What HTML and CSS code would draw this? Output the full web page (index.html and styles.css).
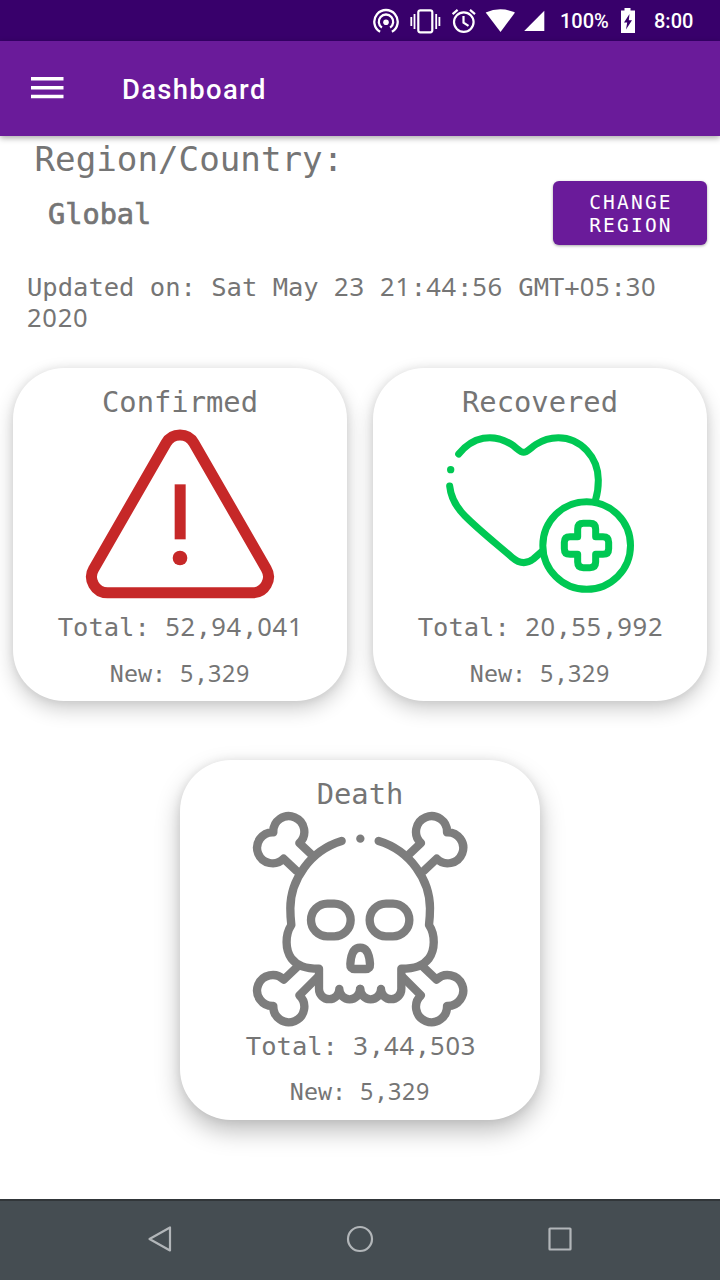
FILE: index.html
```html
<!DOCTYPE html>
<html lang="en">
<head>
<meta charset="utf-8">
<title>Dashboard</title>
<link rel="stylesheet" href="styles.css">
</head>
<body>
<div class="status">
  <svg class="status-icons" width="174" height="28" viewBox="0 0 174 28" fill="none" stroke="#fff">
    <g stroke-width="2.3">
      <path d="M7.1 24.8A11.7 11.7 0 1 1 18.9 24.8"/>
      <path d="M8.9 20.6A7.2 7.2 0 1 1 17.1 20.6"/>
      <circle cx="13" cy="15.2" r="2.8" fill="#fff" stroke="none"/>
    </g>
    <g stroke-width="2.2">
      <rect x="45.3" y="3.3" width="14" height="22" rx="2"/>
      <path d="M41.5 7v15M38.3 10v9M63.2 7v15M66.4 10v9" stroke-width="1.8"/>
    </g>
    <g stroke-width="2.2">
      <circle cx="90.8" cy="15.1" r="9.8"/>
      <path d="M90.5 9v6.700l5 3.200M79.600 7.100l5-4.200M102 7.100l-5-4.200"/>
    </g>
    <path d="M112.700 5.600Q127.300-1.200 142 5.600L127.500 25z" fill="#fff" stroke="none"/>
    <path d="M171.300 3.800V24H151.200z" fill="#fff" stroke="none"/>
  </svg>
  <span class="battery">100%</span>
  <svg class="battery-icon" width="16" height="26" viewBox="0 0 16 26">
    <path d="M4.5 0h6v2.6H15V25H1V2.6h3.5z" fill="#fff"/>
    <path d="M9.500 6L4 14.400h3.200L6 21.500 12 12.300H8.800z" fill="#38006b"/>
  </svg>
  <span class="clock">8:00</span>
</div>
<header class="appbar">
  <svg class="menu" width="33" height="22" viewBox="0 0 33 22" fill="#fff"><path d="M0 0h32.5v3.500H0zM0 8.900h32.500v3.500H0zM0 17.700h32.500v3.500H0z"/></svg>
  <h1 class="title">Dashboard</h1>
</header>
<main class="content">
  <section class="region">
    <div>
      <div class="region-label">Region/Country:</div>
      <div class="region-name">Global</div>
    </div>
    <button class="change">CHANGE<br>REGION</button>
  </section>
  <p class="updated">Updated on: Sat May <span class="num">23</span> <span class="num">21</span>:<span class="num">44</span>:<span class="num">56</span> GMT+<span class="num">05</span>:<span class="num">30</span><br><span class="num">2020</span></p>
  <section class="row">
    <article class="card">
      <h2 class="name">Confirmed</h2>
      <svg class="icon" width="220" height="190" viewBox="0 0 660 570" fill="none" stroke="#c62828" stroke-width="33">
        <path d="M71.4 446L288.4 69A48 48 0 0 1 371.6 69L588.6 446A48 48 0 0 1 547 518.5H113A48 48 0 0 1 71.4 446z"/>
        <path d="M330.500 193v165"/>
        <circle cx="330" cy="414" r="22" fill="#c62828" stroke="none"/>
      </svg>
      <p class="total">Total: <span class="num">52</span>,<span class="num">94</span>,<span class="num">041</span></p>
      <p class="new">New: <span class="num">5</span>,<span class="num">329</span></p>
    </article>
    <article class="card">
      <h2 class="name">Recovered</h2>
      <svg class="icon" width="220" height="190" viewBox="0 0 660 570" fill="none" stroke="#00c853" stroke-width="21" stroke-linecap="round" stroke-linejoin="round">
        <path d="M86 102C128 50 188 38 244 73C258 82 271 97 281 97S304 82 318 73C341 58 362 53 385 53C452 53 505 112 505 180C505 203 502 222 497 238"/>
        <path d="M59 198C63 235 82 265 105 288C150 333 200 372 246 412C268 431 289 433 310 417L334 396"/>
        <circle cx="62" cy="149" r="11" fill="#00c853" stroke="none"/>
        <circle cx="470" cy="376.500" r="131.500"/>
        <path d="M460 310H480Q497 310 497 327V350H519Q536 350 536 367V386Q536 403 519 403H497V426Q497 443 480 443H460Q443 443 443 426V403H420Q403 403 403 386V367Q403 350 420 350H443V327Q443 310 460 310z"/>
      </svg>
      <p class="total">Total: <span class="num">20</span>,<span class="num">55</span>,<span class="num">992</span></p>
      <p class="new">New: <span class="num">5</span>,<span class="num">329</span></p>
    </article>
  </section>
  <article class="card card-death">
    <h2 class="name">Death</h2>
    <svg class="icon-death" width="216" height="216" viewBox="36 123 648 648" fill="none" stroke="#7d7d7d" stroke-width="25" stroke-linecap="round" stroke-linejoin="round">
      <g id="left-half">
        <path d="M212 251L178 219A46.500 46.500 0 1 0 100 187A46.500 46.500 0 1 0 131 266L170 303"/>
        <path d="M232 622L178 676A46.500 46.500 0 1 1 100 708A46.500 46.500 0 1 1 131 629L172 590"/>
        <path d="M305 213C210 242 151 330 151 415Q151 440 154 465C134 495 136 540 154 565C172 588 196 596 237 596V657A30.500 30.500 0 0 0 298 657A31 31 0 0 0 360 657"/>
        <rect x="213" y="401" width="119" height="98" rx="49"/>
      </g>
      <use href="#left-half" transform="translate(721) scale(-1 1)"/>
      <path d="M344 597H377Q391 597 390 582C388 553 382 533 360.500 533C339 533 333 553 331 582Q330 597 344 597z"/>
      <circle cx="361" cy="206" r="12.500" fill="#7d7d7d" stroke="none"/>
    </svg>
    <p class="total">Total: <span class="num">3</span>,<span class="num">44</span>,<span class="num">503</span></p>
    <p class="new">New: <span class="num">5</span>,<span class="num">329</span></p>
  </article>
</main>
<nav class="navbar">
  <svg width="28" height="28" viewBox="0 0 28 28"><path d="M24 2.500V25.500L3.500 14z"/></svg>
  <svg width="28" height="28" viewBox="0 0 28 28"><circle cx="14" cy="14" r="12"/></svg>
  <svg width="28" height="28" viewBox="0 0 28 28"><rect x="3.500" y="3.500" width="21" height="21" rx=".5"/></svg>
</nav>
</body>
</html>
```
FILE: styles.css
```css
* { box-sizing: border-box; }
body {
  margin: 0;
  width: 720px;
  height: 1280px;
  display: flex;
  flex-direction: column;
  overflow: hidden;
  background: #fff;
  color: #757575;
  font-family: "Droid Sans Mono", "DejaVu Sans Mono", monospace;
}
h1, h2, p { margin: 0; font-weight: 400; }
svg { display: block; flex: none; }

.status {
  height: 41px;
  padding-left: 373px;
  display: flex;
  align-items: center;
  background: #38006b;
  color: #fff;
  font: 500 20px/41px Roboto, sans-serif;
}
.battery { width: 48px; margin-left: 13px; padding-top: 2px; }
.battery-icon { margin-left: 12px; }
.clock { margin-left: 18px; padding-top: 2px; }

.appbar {
  height: 95px;
  padding-left: 31px;
  display: flex;
  align-items: center;
  gap: 58px;
  background: #6a1b9a;
  box-shadow: 0 2px 6px rgba(0, 0, 0, .35);
  color: #fff;
  z-index: 1;
}
.menu { margin-bottom: 1px; }
.title { font: 500 27.400px/32px Roboto, sans-serif; letter-spacing: 1.350px; padding-top: 2px; }

.content { flex: 1; }
.num { font-family: "Noto Sans", sans-serif; letter-spacing: .03em; line-height: 1px; }

.region {
  height: 124px;
  padding-right: 13px;
  display: flex;
  justify-content: space-between;
}
.region-label { padding: 2px 0 0 34.500px; font-size: 34.200px; line-height: 42px; }
.region-name {
  padding: 14px 0 0 48px;
  font-size: 28.6px;
  line-height: 40px;
  -webkit-text-stroke: .7px #757575;
}
.change {
  width: 154px;
  height: 64px;
  margin-top: 45px;
  padding: 2px 0 0 2px;
  border: 0;
  border-radius: 6px;
  background: #6a1b9a;
  box-shadow: 0 1px 3px rgba(0, 0, 0, .35);
  color: #fff;
  font: 19.500px/23.500px "Droid Sans Mono", "DejaVu Sans Mono", monospace;
  letter-spacing: 2.200px;
}
.updated {
  height: 108px;
  padding: 12px 0 0 27px;
  font-size: 25.5px;
  line-height: 31px;
  white-space: nowrap;
}

.row { display: flex; gap: 26px; padding: 0 13px; }
.card {
  flex: 1;
  height: 333px;
  display: flex;
  flex-direction: column;
  align-items: center;
  border-radius: 51px;
  background: #fff;
  box-shadow: 0 8px 20px rgba(0, 0, 0, .2), 0 0 10px rgba(0, 0, 0, .08);
}
.card-death {
  width: 360px;
  height: 360px;
  margin: 59px auto 0;
  box-shadow: 0 11px 24px rgba(0, 0, 0, .26), 0 0 10px rgba(0, 0, 0, .08);
}
.name { height: 52px; padding-top: 14px; font-size: 28.8px; line-height: 40px; }
.icon-death { margin-top: -1px; }
.total { height: 50px; padding: 2px 0 0 1px; font-size: 25.5px; line-height: 31px; }
.card-death .total { margin-top: 2px; padding-left: 2px; }
.card-death .new { margin-top: -1px; }
.new { font-size: 23.3px; line-height: 28px; }

.navbar {
  height: 81px;
  padding: 0 146px 3px;
  display: flex;
  justify-content: space-between;
  align-items: center;
  background: #454d52;
  border-top: 2px solid #313639;
}
.navbar svg { fill: none; stroke: #b2b6b9; stroke-width: 2.2; stroke-linejoin: round; }
```
